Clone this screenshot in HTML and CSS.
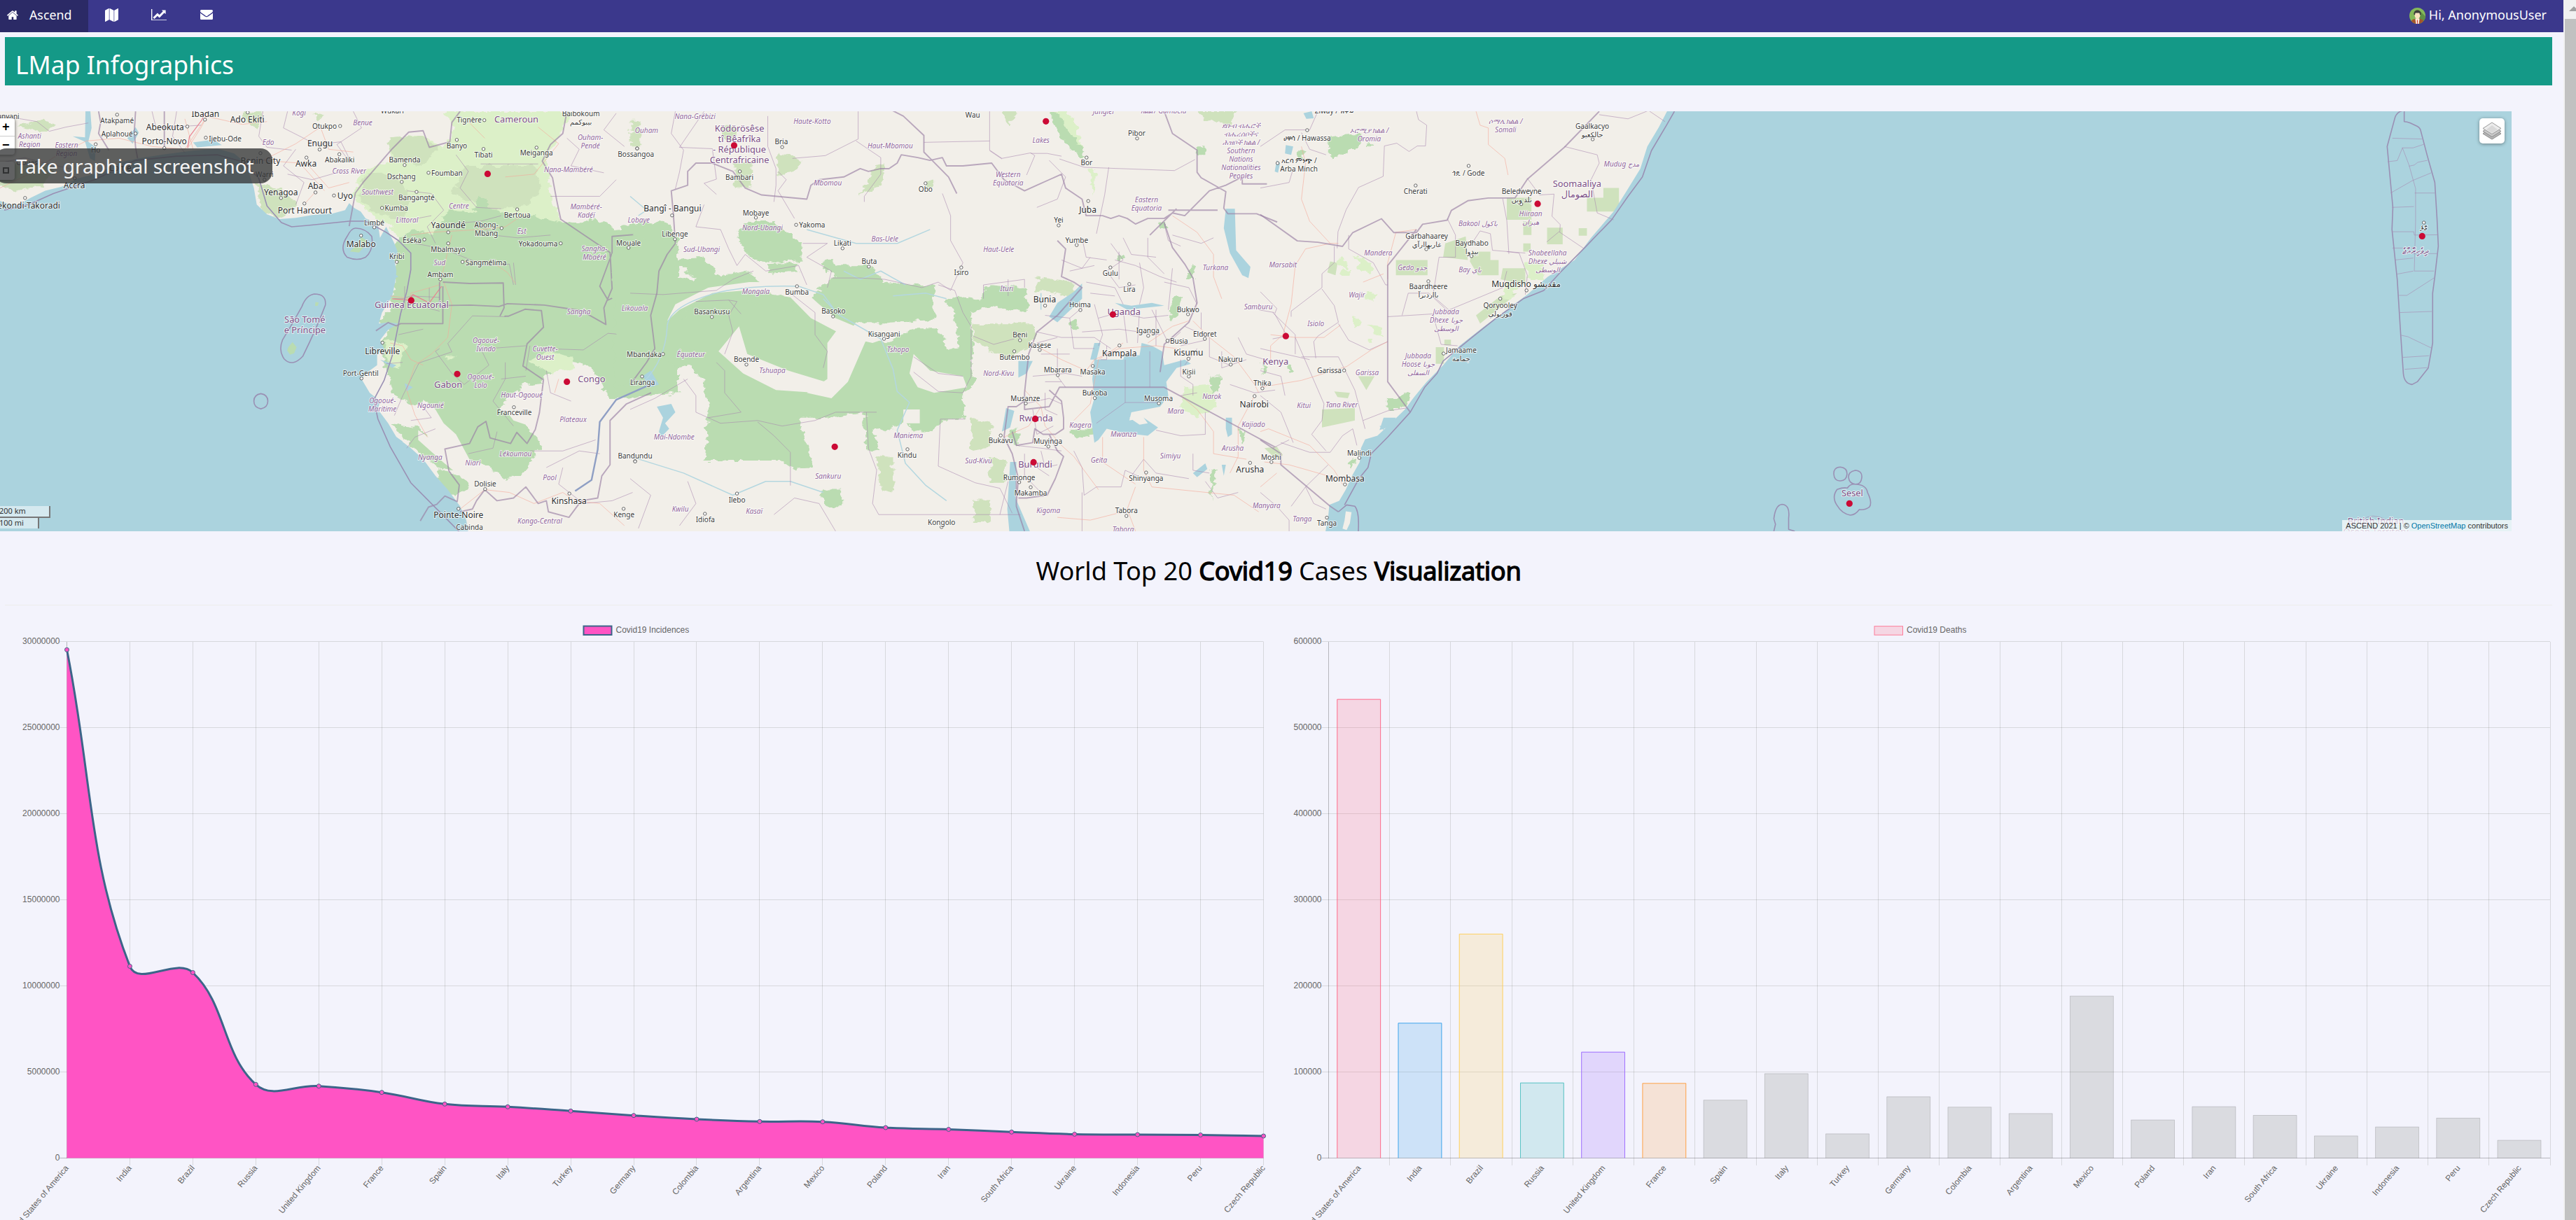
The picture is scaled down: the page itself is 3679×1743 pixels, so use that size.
FILE: index.html
```html
<!DOCTYPE html>
<html lang="en">
<head>
<meta charset="utf-8">
<title>Ascend</title>
<link rel="stylesheet" href="styles.css">
</head>
<body>
<div class="window">
<div class="page">
  <header class="nav">
    <a class="brand"><svg class="i-home" viewBox="90 230 1620 1310"><path d="M1472 992v480q0 26-19 45t-45 19h-384v-384h-256v384h-384q-26 0-45-19t-19-45v-480q0-1 .5-3t.5-3l575-474 575 474q1 2 1 6zm223-69l-62 74q-8 9-21 11h-3q-13 0-21-7l-692-577-692 577q-12 8-24 7-13-2-21-11l-62-74q-8-10-7-23.5t11-21.5l719-599q32-26 76-26t76 26l244 204v-195q0-14 9-23t23-9h192q14 0 23 9t9 23v408l219 182q10 8 11 21.5t-7 23.5z"/></svg>Ascend</a>
    <a class="link l-map"><svg viewBox="0 0 1792 1792"><path d="M512 0q13 0 22.500 9.500t9.500 22.500v1472q0 20-17 28l-480 256q-7 4-15 4-13 0-22.500-9.500t-9.500-22.500v-1472q0-20 17-28l480-256q7-4 15-4zm1248 0q13 0 22.500 9.500t9.500 22.500v1472q0 20-17 28l-480 256q-7 4-15 4-13 0-22.500-9.500t-9.500-22.500v-1472q0-20 17-28l480-256q7-4 15-4zm-1120 0q8 0 14 3l512 256q18 10 18 29v1472q0 13-9.500 22.500t-22.500 9.500q-8 0-14-3l-512-256q-18-10-18-29v-1472q0-13 9.500-22.500t22.500-9.500z"/></svg></a>
    <a class="link l-chart"><svg viewBox="0 128 2048 1536"><path d="M2048 1536v128h-2048v-1536h128v1408h1920zm-128-1248v435q0 21-19.500 29.500t-35.500-7.500l-121-121-633 633q-10 10-23 10t-23-10l-233-233-416 416-192-192 585-585q10-10 23-10t23 10l233 233 464-464-121-121q-16-16-7.500-35.500t29.500-19.500h435q14 0 23 9t9 23z"/></svg></a>
    <a class="link l-mail"><svg viewBox="0 256 1792 1408"><path d="M1792 710v794q0 66-47 113t-113 47h-1472q-66 0-113-47t-47-113v-794q44 49 101 87 362 246 497 345 57 42 92.500 65.500t94.500 48 110 24.500h2q51 0 110-24.500t94.500-48 92.500-65.500q170-123 498-345 57-39 100-87zm0-294q0 79-49 151t-122 123q-376 261-468 325-10 7-42.500 31t-54 38.500-52 32.500-57.500 27-50 9h-2q-23 0-50-9t-57.500-27-52-32.500-54-38.500-42.500-31q-91-64-262-182.500t-205-142.500q-62-42-117-115.500t-55-136.500q0-78 41.500-130t118.500-52h1472q65 0 112.500 47t47.500 113z"/></svg></a>
    <div class="user">
      <svg class="avatar" viewBox="0 0 46 46"><defs><clipPath id="av"><circle cx="23" cy="23" r="23"/></clipPath></defs><g clip-path="url(#av)"><path fill="#84b85a" d="M0 0h46v46H0z"/><path fill="#5f8f45" d="M31 10l15 15v21H26z"/><path fill="#a4562b" d="M4 46c0-10 5-13 13-14h12c8 1 13 4 13 14z"/><path fill="#fff" d="M17 31h12l-2 15h-8z"/><path fill="#d8463c" d="M21 35h4l-1 11h-2z"/><path fill="#fbe3c0" d="M15 16q8-5 16 0v7q-1 6-5 8v4h-6v-4q-4-2-5-8z"/><path fill="#3d3d3a" d="M13 20c-1-8 3-13 10-13s11 5 10 13l-3 1-1-6H17l-1 6z"/></g></svg>
      <span>Hi, AnonymousUser</span>
    </div>
  </header>
  <h1 class="banner">LMap Infographics</h1>

  <section class="map">
    <svg class="tiles" viewBox="0 159 3587 600" width="3587" height="600">
      <defs><filter id="rough" x="-5%" y="-5%" width="110%" height="110%"><feTurbulence type="fractalNoise" baseFrequency=".045" numOctaves="3" seed="4"/><feDisplacementMap in="SourceGraphic" scale="26" xChannelSelector="R" yChannelSelector="G"/></filter></defs>
      <!-- west: Ghana to Congo -->
      <g transform="translate(0 150) scale(.5867 .3954)">
        <path class="lg" d="M1080 23H1390L1370 90 1330 190 1340 320 1370 430 1400 460 1300 520 1000 520 950 440 890 380 860 330 880 240 950 200 955 130 1010 105 1080 150 1110 80z"/>
        <path class="mg" d="M1130 220H1300L1320 300 1290 360 1200 380 1100 320zM940 120L1020 110 1070 160 1020 220 960 190zM890 250L960 250 1000 330 980 420 900 380 870 330zM0 230L40 210 90 200 130 240 100 290 40 310 0 290zM40 80l60-30 30 20-20 30zM590 23h50l-10 60-30-20zM620 280l60 20 40 60-30 50-50-20zM760 30l30 10-20 20z"/>
        <path class="dg" d="M960 500L1000 450 1060 470 1090 380 1150 390 1170 330 1200 380 1250 400 1300 400 1350 420 1400 430 1450 410 1500 450 1568 420 1650 480V1040L1500 1060 1480 1060 1465 1010 1440 950 1390 925 1340 960 1320 1000 1280 1010 1240 1050 1215 1100 1260 1110 1290 1180 1320 1230 1290 1290 1270 1340 1230 1350 1180 1300 1120 1270 1090 1180 1060 1120 1035 1070 1000 1080 960 1050 940 960 925 870 945 810 920 780 950 740 960 640zM950 1150L1020 1165 1060 1230 1110 1310 1080 1320 1020 1260zM1065 1315L1130 1350 1145 1380 1110 1410 1070 1380zM1440 900h25v8h-25z"/>
        <path class="lg" d="M1290 930l40 -40 60 20 10 40-60 20zM940 850l50 20-20 80-30-20zM1085 905l25 5-20 15z"/>
        <path class="land" d="M1030 1065l30 35 20 50 30 40 40 110-20 10-50-80-30-60-25-60zM1018 1175l40 40 60 85 30 40-20 10-50-60-60-80zM1240 1050l20-20 20 60 20 10-10 60-40-20-20-40zM1520 750l8 60 10 100 12 40-12 0-14-60-12-100z"/>
        <path class="sea" d="M-5 345L40 365 75 335 110 310 150 295 190 265 230 250 300 205 340 192 400 178 470 165 530 158 570 175 590 200 605 240 618 300 625 360 650 395 680 412 720 408 760 398 810 392 840 380 850 355 862 372 878 385 890 410 920 430 925 480 940 440 960 500 968 530 960 560 965 600 962 640 955 690 930 750 922 790 945 785 970 790 945 812 925 850 935 880 918 900 918 940 895 965 880 990 900 1040 925 1070 920 1100 945 1150 965 1200 1000 1240 1030 1280 1060 1340 1090 1390 1120 1450 1135 1500 1140 1545H-5z"/>
        <path class="isle" d="M880 478l12 10-3 20-15 25-22-4 15-22zM768 712l8 2-3 12-6 0zM702 875l10-18 10 18-6 22-10 5-7-15z"/>
        <path class="sea" d="M208 23h12l3 60-8 50 18 20-2 50-12-10-12-60-30-20 30 4zM310 120l20-40 8 20-15 40zM470 135l50-10 20 20-60 8zM950 600l20 20-15 10zM925 920l40 20-10 10zM985 1005l20 15-15 15zM955 1190l25 25-5 10zM918 1120l15 10-10 20z"/>
        <path class="adm" d="M30 45L90 60 120 95 160 80 215 65M0 210l60-20 50 20 60 20M370 23l10 60 110-10M430 23l-10 90 30 60M640 23l-10 90 20 40 60 10M700 23l-10 60 80 60 60-10 20 60M860 23l20 60-60 60 30 60M720 160l-30 60 50 60-20 80M830 240l-70 30-60-20M1170 213H1310M1110 180l30 60-20 60 40 70 60 5M990 310l60 10 30 60-40 60 20 60M1050 400l-70 20M1160 420l40 50 60 10 80-10M1010 500l70 20 100 60 60-5 10 75M1250 570l5 80M1090 430l80-10 50-20M1340 330h120l40-60M1380 120l30 40-20 60 80 25M1500 30l-30 60 50 60M960 700h20l20-10 70 5M985 740V655M1045 660v75l25 10M1150 762l80 3M1150 762l-60 100 10 30-80 40-40 120-20 70M1030 810l-60 20M940 935l40-5M1170 880l20 60-60 70-30-40-40-80 10-10M1190 880l90-10M1230 930v60l-30 80 50 90M1000 1140l50-10-20-40M990 1240l20-40 50-30M1210 1180l-10 60-60 20M1280 980l-60 10M1320 880l100 5 60-60 80 10M1290 870l-10 90M1330 960l10 80 50 30M1290 1250l80 0 80-40M1330 1310l80-60 50 10M1370 1310l-10 60 60 70 70-10 50-30"/>
        <path class="road" d="M0 300l70-50 60-60 80-60 80-10 80 30 80 10 50-110M470 160l-20-110M460 150L490 80 510 23M500 40l90 30 60-10M640 200l90 10 60 100M640 200l80-60 60-60M740 200l60 100 50-20M740 360l30-50M780 80l20 80 60 10M1000 470l50-10 120-10 60-10 50-50M1100 470l-20 120-10 60-70 30 0 20-50-10M1080 640l20 80-10 120-40 60-40 40-20 90 20 90 30 80M1125 565h70l40 40 20 40M950 860l30 10 20 50 30 20M1350 1040l10-50M1120 1460l60-70 60 10 60 40 70-40 30 30 60 10 60 80M1310 80l50 60-60 110-70 10M1180 120l-40-60"/>
        <path class="redroad" d="M457 155l4-40 30-60 8-25M955 700l40 5 10-20 40 30 30-60"/>
        <path class="bord" d="M240 23l5 40-5 40 25 60M330 23l-3 70 3 60 5 40M400 23v130M1120 23l-20 40-5 70-50 20-15-60-35 5-40 60-70 120-20 40-10 80-5 40M1380 23l-10 80-30 40-20 60 25 60 10 80 10 70 60 60 60 60 5 130-20 70 5 60-60-50-90-20-90-5-20 10-70-5-75 2V640M1078 655V790H975l-10 8-20-12-30 30M1078 640l65 5 82-2 2 90-10 30M1228 763l10 0 40-25 40 5 5 60-40 60-10 80 50 50-10 120-10 60-20 50-25-40-15 40-50-20-10-60-20 20-20 60-60 20 10 80 25 50-5 60-30-20-20 30-20 10-20 50M1120 1470l30-10 10-30 20-40 30 40 40-10 30-40 30 60 20-10 5 40 50 20 30-60 40-10 10-80 20-40 0-160 40-60 60-40M1555 655l-75 50-20-50 30-120 0-60 80-10"/>
        <path class="river" d="M1400 1395l40-40 15-110 5-100 40-80 60-40 30-20"/>
        <path class="mar" d="M10 380l60-20 60-40 100-50 100-70 100-15 100-5 60 25 40 60 20 100 35 60 25 15 40-5 100-15 40 0 50 40 30 30 30 45 0 60-10 80-15 80-20 150-20 90-25 70 10 70 30 100 50 130 80 120 60 90 40 80 10 70M865 445q25 0 40 30 5 50-15 75-20 15-45 0-20-30 0-75 10-30 20-30zM765 683q30 0 27 40-20 80-55 185-25 40-45 10-15-30-4-70 25-60 47-120 10-40 30-45zM635 1043q17 4 17 27t-17 28q-17-5-17-28t17-27z"/>
      </g>
      <!-- centre: Central Africa to Lake Victoria -->
      <g transform="translate(900 150) scale(.5867 .3954)">
        <path class="dg" d="M-40 490L100 490 105 560 110 620 150 630 210 620 290 600 330 660 420 690 440 700 470 650 500 620 480 590 500 580 580 580 620 640 700 650 740 655V775L620 790 560 790 530 800 620 860 690 810 740 810 768 850 770 880 800 875 790 740 765 710 800 690 850 700 870 650 960 660 970 740 920 745 890 720 830 750 835 950 840 1010 815 1040V1135H760L740 1180 690 1180 670 1140 620 1180 590 1170 610 1250 575 1245 570 1110 480 1130 410 1130 445 1310 400 1315 370 1285 180 1285 190 1110 180 1000 140 940 100 950 80 860 40 970 0 1000-40 1030zM0 460l70-40 25 10 10 55-60 5zM290 420l60 0 40 50 25 30 0 60-50 10-60-10-30-40-15-60zM335 575l75-5 0 30-70 10zM465 570l30-15 10 30-30 20zM648 720l20-10 0 60-20 0zM100 560l80-10 40 70-60 10zM465 1390l50 0 0 60-40 0zM1070 1170l60 0 10 20-60 15z"/>
        <path class="land" d="M90 780l20-60 80-60 100-20 110 0 60 80 40 50 80 50 30 30-20 10-60-20-90-70-50-75-110-25-80 10-80 60zM265 800l20 100 100 60 90 40-20 40-100-10-80-60-60-80zM480 860l30-60 70 30-50 170-40 60-60-20 50-50zM690 900l40 60 80 20 10 40-80 20-40-20-20-50zM665 1100h40v50h-40z"/>
        <path class="dg" d="M110 760l90-70 100-20 70 20 40 60-60-10-60-30-90 10-80 60z"/>
        <path class="mg" d="M1 60h25v90H0zM225 75h30v50h-30zM255 210h37v90h-37zM360 170l60 30-10 30-50 30zM600 220l20-10-10 80-40 30-10 10zM720 270h20v30h-20zM835 1425h38v85h-38zM875 1280h38v85h-38zM905 23h40l-20 50zM1380 23h100l-20 50-60-20zM600 1270h40l0 130-30-10zM835 790h150v60l-60 70-30-20-60-50zM830 1130l55 30-20 80-35 10zM990 620l90 20 10 60-60-20-40-10z"/>
        <path class="lg" d="M1035 23h30l25 70 10 80-30-40-30-60zM1120 230h12l-2 70-8 30zM1350 1020l60-10 20 80-50 40-40-40z"/>
        <path class="dg" d="M1020 23h20l30 80 40 80-10 10-50-70zM1360 580h10v50h-15zM1285 425l20-5 5 25-20 5zM1190 540h10v20h-10zM1070 780l15-10 5 40-15 5zM1320 700l20-10-5 70-20 20zM1415 980h20v60h-20zM1380 150h20v30h-20zM1410 1320h15l-10 110zM920 1170l20 0 5 60-15-10zM1480 1170l20 20-10 40z"/>
        <path class="sea" d="M1130 920L1200 920 1205 900 1240 905 1245 860 1270 870 1295 890 1300 940 1350 920 1365 935 1330 950 1305 1000 1310 1050 1290 1090 1220 1110 1215 1140 1250 1130 1285 1165 1260 1195 1200 1185 1160 1170 1140 1210 1130 1220 1120 1110 1130 1060 1125 990zM1100 645l0 55-60 85-20-20 20-50 40-40zM1450 375l22 0 3 150 35 60-5 40-15-10-30-80-15-90zM945 925l35 0-15 45-20 15zM915 1095l20 10-10 60-20 15zM925 1290h15l-2 130 35 120h-50l-5-80zM65 1090l35-10 10 30-25 40 10 20-20 30-5-20 10-50zM50 960l20 50-20 10-20-40zM1370 1330l30-35 5 20-25 30zM1440 1300l10 0-5 40zM1450 1130l15 0 0 60-10 10-5-30zM1180 715l40 10 50-10 30 10-90 15zM1130 860l15 0-10 60h-15z"/>
        <path class="land" d="M1215 1130l30-10 15 30-20 5z"/>
        <path class="water" d="M470 700l40 60 100 85 30 110 10 80 30 40-30 100 20 120 50 80 50 55M410 655l60 30 30 60M410 655q-110-5-190 20-130 50-130 130-5 120-60 200M0 1270l130 60 120 80 80-50 60 0 80 40M430 450l120 50 100 0 80-50M520 600l40 30 50-30 60 50M640 690l80-10 50 20M0 330l40 50-20 20M1000 740l0-60"/>
        <path class="adm" d="M110 23l-10 80 30 60-10 80-10 60M335 40v110l20 80 0 60-5 60M180 23l-60 130 80 5 10 110-30 15 30 40M360 240l20 30-20 40 40 100M555 23l0 100-80 60-80 10M550 130l60 60 0 60-40 80 0 20M875 23v140l30 30 70-20 10 10-20 70M875 130l-160 5M875 165l30 30M975 175h40l35 10M1020 200l40 60-20 80-50 30M1165 225l-10 100-20 140M1045 195l60 30 220 12 50-40M420 500l60 0-50 50 60 50-10 60M760 320l20 80 0 90 30 80-30 100-30-30-40 20-90-30-60-5-70 0M180 360l-20 80 60 10 20 70 20 60 20-40 50 60 80-20 20 70M750 650l40 20 20 80 20 50 0 100 0 80-20 60-60-5-60-70M690 910l60 60 60 10M0 680l80 5 130-15 40-40 50-30M160 710l80-5 20 5-20 50 10 60-20 80M240 705l30 50M210 930l20 30 0 80 40 70-80 20M390 680l60 70 0 80 30 60-10 60M310 1145l40 50 40 60 0 120M130 990l30 60 0 60 60 40 90-10 60 20 80-20 50-30 100 0M575 1110l5 130 20 80-10 120 15 40H950M815 1135h-60l-5 170 90 60 60 20 30 90M0 1100l60-40 80-70M0 1350l50 60-30 120M140 1360l20 80-40 80M350 1480l50-60 60 20 40 100M900 1480l20-120M835 835l50 30 50-20M920 630l0 60M860 700l0-50 100-20 0 30M1080 1250l20 60 5 100 30-30 60 0 10-60 30 20M1100 1400l0 140M1220 1340l30-60 30 50 80 20M1400 1110v80l-60 5-60-20M1370 1260l0 60 40 10M1400 1360l30 60 50-20M1320 470l70 30 30-20M1050 560l50 30 20-40M1110 640l70 20 20 60M1180 560l50 20 60 40 40 20M1190 530l0 100M1240 570l10 90-10 60M1320 590l-10 150M1300 640l60 20 20 60M1010 760l60 10 40-50M990 820l60 20 80 0 40 40M1070 770l10 110 50 0M1130 720l20 110-10 40M1040 880l0 100 20 40M980 980l80-10 40 10M1200 740l10 120M1240 740l-5 120M1280 740l0 130M1010 1000l40 0M1270 740l20 60 20 60 30-40M940 1230l60 10 50 10M960 1260l0 80 40 60M1000 1250l10 60 30-10M980 1300l40 40M950 1310l50-20M1350 800l60 40 0 70 50 30M1390 750l0 60M1440 890l0 60 60-30M1340 1050l40-10M1460 1010l60 30 50-10M1480 840l20 60 68 30M1530 740l38 10M1205 920v155l80 0M1205 1075l-70 75M1265 890v130M1160 870v50h-15"/>
        <path class="adm" d="M1170 500l30 60-40 40 30 60 40-10M1200 480l20 60 60 10M1260 480l0 70 40 60M1300 430l10 60 30 20M1100 480l10 70 50 10M1070 600l60-20M1120 680l60 10M1140 770l50-20 60 20 60-10M1100 820l90-10 100 20M990 860l50-20M1000 900l70 0M960 1080l60-20 30 20M980 1100l10 90 40-30M1010 1040l0 60 30 20M1340 920l0 60 30 30 0 40M1380 880l-30 60M1340 870l60-20"/>
        <path class="road" d="M1320 400l60 60 40 80 0 80 20 80M1000 1090l-30 70-60 40M960 1030l40 60 10 70 40 70 30 40 60 120M1000 880l50 40 60 40 20-40 60-40 90-10 50 10M1260 860l60-60 40-20M1370 780l40 60 60 70 50 100 10 30M1230 1380l-20 80 20 80M1250 1200l0 120 20 60 200 30 60 60M1520 1050l-40 110 0 110-20 60M1040 1490l80 10 80-30M1150 1200l0 90 80 80M1200 860l-60 60-20 160-40 60M1340 1050l40 50 40 80 0 80 80 20"/>
        <path class="bord" d="M0 1010l40-80 20-50-10-120 15-80 5-80 20-60 20-40-5-110-5-80 40-20 0-50 20-30h40l50 30 30 60 40 25 110 15 10-50 20-20 60-10 40-30 20 10 30-10 20 0 20-20 10-30 40 10 30 10 30-10 10 30 40 0 70-10 30 60 50 40 30-20 30-20 30-20 10 50 40 40 10 60 40 0 20 10 20-10 20 10 20 20 30-20h40l20-20 30 10 60-90 40-20 40-30 0 25 60 0M795 320l-20-60-40-60-20-30 0-60-50-70-40-30-15-30 20 0M1265 470l65-95M1310 380h120M1300 23l20 80 60 60 0 80 10 20 60 50-5 60 10 20H1525l50 30M1040 490l20 30-10 100 30 20 20 20-60 100-50 60-20 80-10 140 0 60 60-10 25-70H1300l275 220M1300 425l20 90 30 60 20 50 10 90-20 70-60 80-10 100M960 1040l0 30-20 20-20 0-10 110 20 60 15 90-5 90M1020 1030l30 40 5 60 0 40-20 20-30 0-20-20-5 50-40 10-10-50M1020 1190l20 60 15 20-20 80-20 60-50 10-20 0M940 1350l0 100 20 90"/>
      </g>
      <!-- east: Horn of Africa coast -->
      <g transform="translate(1800 150) scale(.5867 .3954)">
        <path class="dg" d="M165 115l80-10 0 40-30 20-30 30-15 0zM255 130l20 20h-10zM345 1040h20l-10 50-50 0zM310 1060h30v40h-30zM220 1275l12 5-5 30-10 0zM70 940h8v30h-8zM0 930l15 20-10 30zM90 170l15 0 0 20-15 0z"/>
        <path class="mg flat" d="M330 560h77v55h-77zM600 335h60v80h-60zM640 420h20v50h-20zM698 443h38v60h-38zM775 445h20v27h-20zM795 335h40v50h-40zM835 300h38v85h-38zM450 500l50-25 5 85-60-10zM515 530h45v30h20v55h-50l-20-50zM590 590h55l0 60-60-20zM170 565l18 5-5 45-20-10zM150 1100l80-5 0 45-80 25zM238 980h40l-20 50zM427 875h20v60h-20zM640 500h18v30h-18zM448 848h16v20h-16zM525 760l60-70 40-10-40 50-50 60zM180 1035l38 5-5 20-25-5zM10 1240l30-5 15 30-20 10z"/>
        <path class="lg" d="M195 540q20 20 15 50l-20-10zM230 545l40 25 5 40-30-10zM195 590l25 5-5 20-20-5zM260 670l20 10-5 25-20-5zM225 765l18 10-8 30-10-10zM265 790l30 15 0 30-20-10zM262 845h15v12h-15zM640 570h50v60h-40zM600 640l30 10-20 50-20 0z"/>
        <path class="sea" d="M62 145l18 5-5 30-15-5zM40 200l8 10-5 35-8-5zM105 30l20-7 5 25-18 2zM300 1130l30 0-10 30-30 15zM290 1160l15-5-5 20z"/>
        <path class="sea" d="M990 23L970 80 942 150 925 230 892 310 860 385 805 480 765 560 700 620 650 685 600 740 545 800 485 870 445 940 405 1000 372 1060 352 1100 310 1160 285 1195 255 1208 245 1240 242 1290 225 1335 208 1390 192 1430 168 1445 165 1490 158 1545H3100V10z"/>
        <path class="land" d="M208 1468l14 3-4 40-8 25-10-5 5-30z"/>
        <path class="adm" d="M380 23l5 30 20 20-3 75-20 0-20 20-30-30-30 10-3 110-60 40-30 80-20 80-2 60M825 35l70 15 50-30 40 40M740 150l80 30 5 30-20 60 15 120 40 25M650 265l30 60 35-3-5 80 20 30-1 27M590 338l10 80 5 120M455 410l20 60 0 80 -40 0-15 140 50 65M515 500l20-45 25 10 5 60 80 10M600 530l30 5 20 80-5 70M600 600l-10 60-130 80M310 765l110-10 20 110 40 5M345 760l15-80 50 0 50 70M180 510l0 60-30 40 0 50-75 85 0 20M215 470l0 50 60 50 30 80 5 0M150 665l30 60 10 60-50 50-10 20 5 60M0 675l40 60-5 20 30 80-35 10M30 750l55 80 0 70M190 790l25 60 50 35 45-30M85 840l70 240-5 60-25 50 35 60M100 910l90 0 40 120 25 140M250 1140l60-35 45-10M50 1220l70 35 50 0 30-60 25-25 10 60M110 1380l55-80M75 1450l35-70 20 60 30 20M697 495l30-37 60 60M0 880l60 20 60 20M0 960l50 20 10 70M0 1050l50 60 30 110M30 1240l40-30M0 1400l40 50 30 50 0 40M0 150l60-60 60 0 20-67M100 100l20 60 40 20M0 300l70-20 10-50"/>
        <path class="road" d="M100 150l10 60-10 130 20 80 50 80 20 0M525 23l10 50 20 10 0 60 40 50 8 60M170 500l-60 20-25 60-10 140-20 110-30 40 0 50M25 830l60 10 70 0 40-45M310 630l0-60 20-110 50-10M250 640l50-30M0 1020l100-25 110-50 60-60 40-30M0 1180l20-10 100 60 60 90 20 50M10 1290l60 10 130 55M0 1380l40-50"/>
        <path class="bord" d="M825 23l-85 130-90 115-30 68h-65l-50 10-40 35-10 35-60 15-15 30-55 0-30-50-70 50-25 50-60-15-50-5-90-95M380 450l-70 130v420l45 90 10 20M0 1210l50 50 0 40 120 150 20 20"/>
        <path class="mar" d="M1008 23L990 70 952 165 930 260 895 330 855 415 790 515 730 605 690 670 640 700 570 775 515 840 445 925 430 970 400 1020 365 1110 310 1200 270 1260 262 1310 240 1350 205 1445M190 1470l20-25 20 5q12 20 8 100M1412 1308q17 3 16 26t-16 24-16-24 16-26zM1448 1320q18 2 16 27t-16 23-16-23 16-27zM1445 1370q30 0 33 30 12 35 5 52-10 12-25 10-10 20-22 20-20-5-32-35-14-30 0-58 15-8 25-5 6-14 16-14zM1250 1540l4-25-4-20q4-50 20-52 20 2 16 50l0 40 15 7"/>
      </g>
      <!-- Indian Ocean: Maldives -->
      <g transform="translate(2700 150) scale(.6244 .3954)">
        <path class="mar" d="M1175 60q6 0 14 5l16 12q7 6 8 18l15 90 17 95 5 130 3 100-8 110-5 60v180l-10 90-25 50-12 10q-18-3-20-40l-6-140-8-200-12-180 2-80-13-220 18-105q5-23 21-25z"/>
        <path class="adm" d="M1148 120l68 3M1170 155h25l25-13M1137 205l22-4 12-46 15 62 15 85v120l-3 178 45 0M1186 221l12-4 8-10 22-7M1144 318l50-45 43-28M1199 318h46M1147 370l50-3M1147 458h50l1 12 53-1M1148 517h48M1154 560l42-7M1196 537h54M1159 611l37-11M1163 688h18l62-63M1165 750l73-4M1168 832l15 5 54 41M1172 912l60-6M1176 955l52-6M1080 1500q20-30 55 0"/>
      </g>
      <g id="places"></g>
    </svg>
    <div class="zoom"><span>+</span><span>−</span></div>
    <div class="box"><i></i></div>
    <div class="layers"><svg viewBox="0 0 26 26"><path fill="#b5b5b5" stroke="#8d8d8d" d="M13 8l13 9-13 8L0 17z"/><path fill="#c8c8c8" stroke="#8d8d8d" d="M13 5l13 8.500-13 8L0 13.500z"/><path fill="#ececec" stroke="#9a9a9a" d="M13 1l13 8.500-13 8L0 9.500z"/><path fill="#d9d9d9" d="M13 5l8 6-8 5-8-5z"/></svg></div>
    <div class="scale"><span class="km">200 km</span><span class="mi">100 mi</span></div>
    <div class="attr">ASCEND 2021 | © <a>OpenStreetMap</a> contributors</div>
    <div class="tip">Take graphical screenshot</div>
  </section>

  <h2 class="title">World Top 20 <b>Covid19</b> Cases <b>Visualization</b></h2>
  <section class="charts">
    <svg id="cases" viewBox="0 865 1830 878" width="1830" height="878"></svg>
    <svg id="deaths" viewBox="1830 865 1831 878" width="1831" height="878"></svg>
  </section>
</div>
<aside class="bar"><svg class="up" viewBox="0 0 16 27"><path d="M6 16l7-7 7 7z"/></svg><div class="thumb"></div></aside>
</div>
<script src="script.js"></script>
</body>
</html>
```
FILE: styles.css
```css
* { box-sizing: border-box; }
body { margin: 0; background: #f3f3fc; font-family: "Noto Sans", "DejaVu Sans", sans-serif; overflow: hidden; }
.window { display: flex; width: 3679px; height: 1743px; overflow: hidden; }
.page { width: 3661px; flex: none; }
.nav { display: flex; align-items: center; height: 46px; background: #3b388c; color: #fff; font-size: 17.800px; }
.nav svg { fill: #fff; display: block; }
.brand { display: flex; align-items: center; gap: 16px; width: 126px; height: 46px; padding: 0 0 4px 10px; background: #2b2a66; }
.i-home { width: 16px; height: 13px; }
.link { display: flex; }
.link svg { width: 100%; }
.l-map { width: 19px; margin: 0 0 4px 24px; }
.l-chart { width: 22px; margin: 0 0 4px 47px; }
.l-mail { width: 18px; margin: 0 0 4px 48px; }
.user { display: flex; align-items: center; gap: 5px; margin-left: auto; padding-right: 24px; padding-bottom: 2px; font-size: 18px; }
.user span { padding-bottom: 3px; }
.avatar { width: 23px; height: 23px; }
.banner { margin: 7px 16px 0 7px; height: 69px; padding: 15px 0 0 15px; background: #149987; color: #fff; font-size: 35.500px; font-weight: 400; line-height: 48px; }
.map { position: relative; width: 3587px; height: 600px; margin-top: 37px; background: #f2efe9; overflow: hidden; }
.tiles { display: block; }
.tiles path { vector-effect: non-scaling-stroke; stroke-linejoin: round; }
.land { fill: #f2efe9; }
.sea { fill: #abd3de; }
.dg, .isle { fill: #badcb1; }
.mg { fill: #cfe2bd; }
.lg { fill: #dcf0c8; }
.dg, .lg, .mg { filter: url(#rough); }
.flat { filter: none; }
.adm, .road, .redroad, .bord, .mar, .river, .water { fill: none; }
.adm { stroke: #a583ad; stroke-opacity: .55; stroke-width: 1; }
.road { stroke: #f5a898; stroke-opacity: .75; stroke-width: .8; }
.redroad { stroke: #ea8090; stroke-width: 1.200; }
.bord { stroke: #9a7fa5; stroke-opacity: .65; stroke-width: 1.900; }
.mar { stroke: #9a90b4; stroke-width: 1.600; }
.river { stroke: #8f9fc4; stroke-width: 2.400; }
.water { stroke: #b4d7e0; stroke-width: 1.500; }
#places text { text-anchor: middle; paint-order: stroke; stroke: #fff; stroke-opacity: .7; stroke-width: 2px; stroke-linejoin: round; font-family: "Noto Sans", "DejaVu Sans", sans-serif; }
#places .t { font-size: 10px; fill: #3a3a3a; }
#places .c { font-size: 12px; fill: #2e2e2e; }
#places .n { font-size: 12.800px; fill: #7c4f86; }
#places .s { font-size: 10px; fill: #93689d; font-style: italic; }
.dot { fill: #fff; stroke: #555; stroke-width: .9; }
.hit { fill: #cb0a35; }
.zoom { position: absolute; left: -10px; top: 10px; width: 31px; height: 52px; background: #fff; border-radius: 4px; box-shadow: 0 1px 5px rgba(0,0,0,.65); }
.zoom span { display: block; height: 26px; padding-left: 13px; font: bold 18px/26px "Liberation Mono", monospace; }
.zoom span:first-child { border-bottom: 1px solid #ccc; }
.box { position: absolute; left: -10px; top: 72px; width: 31px; height: 26px; padding: 8px 0 0 14px; background: #fff; border-radius: 4px; box-shadow: 0 1px 5px rgba(0,0,0,.65); }
.box i { display: block; width: 9px; height: 9px; border: 2px solid #222; }
.layers { position: absolute; right: 10px; top: 10px; width: 36px; height: 36px; padding: 5px; background: #fff; border-radius: 5px; box-shadow: 0 1px 5px rgba(0,0,0,.4); }
.layers svg { display: block; }
.scale { position: absolute; left: -5px; bottom: 4px; font: 11px/14px "Noto Sans", sans-serif; color: #333; }
.scale span { display: block; height: 17px; padding-left: 2px; border: 2px solid #777; border-top: 0; background: rgba(255,255,255,.5); }
.km { width: 77px; }
.scale .mi { width: 61px; height: 15px; border-bottom: 0; }
.attr { position: absolute; right: 0; bottom: 0; height: 16px; padding: 0 5px; background: rgba(255,255,255,.7); color: #333; font: 11px/16px "Liberation Sans", sans-serif; }
.attr a { color: #0078a8; }
.tip { position: absolute; left: -8px; top: 53px; width: 397px; height: 50px; padding-left: 31px; border-radius: 17px; background: rgba(52,54,55,.78); color: #f4f4f4; font-size: 28px; line-height: 50px; letter-spacing: -.05px; white-space: nowrap; }
.title { margin: 0 16px 0 7px; height: 106px; padding-top: 32px; border-bottom: 1px solid #ececec; text-align: center; font-size: 36.200px; font-weight: 400; line-height: 48px; }
.title b { font-weight: 400; letter-spacing: -.3px; -webkit-text-stroke: 1.300px #000; }
.charts { display: flex; }
.charts svg { display: block; flex: none; }
.charts text { font: 12px "Liberation Sans", Arial, sans-serif; fill: #666; }
.grid { stroke: rgb(20,28,0); stroke-opacity: .12; }
.zero { stroke: #000; stroke-opacity: .25; }
.area { fill: #ff54c4; }
.curve { fill: none; stroke: #3c6589; stroke-width: 3; }
.pt { fill: #ff54c4; stroke: #3c6589; stroke-width: 1; }
.bar { width: 18px; padding-left: 2px; background: #f1f1f1; }
.up { display: block; width: 16px; height: 27px; fill: #a3a3a3; }
.thumb { height: 1716px; background: #c1c1c1; }
```
FILE: script.js
```js
// Map labels: [sheet, x, y, style, text]; "|" breaks a line.
const sheets = { A: [0, 0.5867], B: [900, 0.5867], C: [1800, 0.5867], D: [2700, 0.6244] };
const labels = [
  ["A",20,40,"t","unvani"],["A",285,57,"t","Atakpamé"],["A",500,31,"c","Ibadan"],["A",602,51,"c","Ado Ekiti"],["A",402,80,"c","Abeokuta"],["A",285,105,"t","Aplahoué"],["A",400,130,"c","Porto-Novo"],["A",548,123,"t","Ijebu-Ode"],["A",72,113,"s","Ashanti|Region"],["A",162,146,"s","Eastern|Region"],["A",233,163,"t","Ho"],["A",653,136,"s","Edo"],["A",728,28,"s","Kogi"],["A",790,77,"t","Otukpo"],["A",883,63,"s","Benue"],["A",955,22,"t","Wukari"],["A",779,139,"c","Enugu"],["A",634,200,"c","Benin City"],["A",644,250,"t","Warri"],["A",68,209,"t","Obuasi"],["A",293,226,"c","Lomé"],["A",745,212,"c","Awka"],["A",827,197,"t","Abakaliki"],["A",850,239,"s","Cross River"],["A",181,290,"c","Accra"],["A",70,363,"c","ekondi-Takoradi"],["A",684,314,"c","Yenagoa"],["A",768,293,"c","Aba"],["A",840,327,"c","Uyo"],["A",742,380,"c","Port Harcourt"],
  ["A",1142,55,"t","Tignère"],["A",1257,52,"n","Cameroun"],["A",1414,32,"t","Baïbokoum|بيبوكمم"],["A",1437,116,"s","Ouham-|Pendé"],["A",1112,148,"t","Banyo"],["A",1177,180,"t","Tibati"],["A",1306,174,"t","Meiganga"],["A",1548,177,"t","Bossangoa"],["A",985,199,"t","Bamenda"],["A",1088,246,"t","Foumban"],["A",977,259,"t","Dschang"],["A",1384,233,"s","Nana-Mambéré"],["A",919,314,"s","Southwest"],["A",1014,334,"t","Bangangté"],["A",1117,366,"s","Centre"],["A",965,372,"t","Kumba"],["A",1427,367,"s","Mambéré-|Kadéï"],["A",1259,397,"t","Bertoua"],["A",911,425,"t","Limbé"],["A",991,415,"s","Littoral"],["A",1091,434,"c","Yaoundé"],["A",1184,432,"t","Abong-|Mbang"],["A",1270,457,"s","Est"],["A",1555,415,"s","Lobaye"],["A",879,501,"c","Malabo"],["A",1003,489,"t","Éséka"],["A",1310,501,"t","Yokadouma"],["A",1530,498,"t","Mouale"],["A",1091,521,"t","Mbalmayo"],["A",1447,518,"s","Sangha-|Mbaéré"],["A",966,547,"t","Kribi"],["A",1070,571,"s","Sud"],["A",1183,569,"t","Sangmélima"],["A",1072,612,"t","Ambam"],["A",1002,722,"n","Guinea Ecuatorial"],["A",1409,747,"s","Sangha"],["A",1545,735,"s","Likouala"],["A",742,776,"n","São Tomé|e Príncipe"],["A",1183,851,"s","Ogooué-|Ivindo"],["A",1327,880,"s","Cuvette-|Ouest"],["A",931,889,"c","Libreville"],["A",878,969,"t","Port-Gentil"],["A",1091,1010,"n","Gabon"],["A",1170,983,"s","Ogooué-|Lolo"],["A",1440,990,"n","Congo"],["A",931,1068,"s","Ogooué-|Maritime"],["A",1048,1086,"s","Ngounié"],["A",1270,1048,"s","Haut-Ogooué"],["A",1252,1112,"t","Franceville"],["A",1395,1137,"s","Plateaux"],["A",1255,1261,"s","Lékoumou"],["A",1047,1272,"s","Nyanga"],["A",1151,1293,"s","Niari"],["A",1546,1269,"t","Bandundu"],["A",1338,1346,"s","Pool"],["A",1181,1370,"t","Dolisie"],["A",1385,1430,"c","Kinshasa"],["A",1116,1482,"c","Pointe-Noire"],["A",1314,1503,"s","Kongo-Central"],["A",1519,1480,"t","Kenge"],["A",1143,1527,"t","Cabinda"],
  ["B",158,40,"s","Nana-Grébizi"],["B",40,91,"s","Ouham"],["B",266,85,"n","Ködörösêse|tî Bêafrîka|- République|Centrafricaine"],["B",443,60,"s","Haute-Kotto"],["B",368,133,"t","Bria"],["B",633,147,"s","Haut-Mbomou"],["B",266,261,"t","Bambari"],["B",481,281,"s","Mbomou"],["B",719,304,"t","Obo"],["B",834,36,"t","Wau"],["B",1000,128,"s","Lakes"],["B",1153,24,"s","Jungler"],["B",1233,103,"t","Pibor"],["B",1111,209,"t","Bor"],["B",920,250,"s","Western|Equatoria"],["B",1298,22,"s","ክልል / Gambela"],["B",1487,74,"s","ደቡብ ብሔሮች|ብሔረሰቦችና|ሕዝቦች ክልል /|Southern|Nations|Nationalities|Peoples"],["B",1114,379,"c","Juba"],["B",1257,341,"s","Eastern|Equatoria"],["B",103,374,"c","Bangî - Bangui"],["B",306,389,"t","Mobaye"],["B",1043,416,"t","Yei"],["B",443,433,"t","Yakoma"],["B",322,444,"s","Nord-Ubangi"],["B",109,466,"t","Libenge"],["B",620,484,"s","Bas-Uele"],["B",517,499,"t","Likati"],["B",174,523,"s","Sud-Ubangi"],["B",897,521,"s","Haut-Uele"],["B",1087,488,"t","Yumbe"],["B",582,565,"t","Buta"],["B",1425,587,"s","Turkana"],["B",806,605,"t","Isiro"],["B",1169,607,"t","Gulu"],["B",917,664,"s","Ituri"],["B",1215,666,"t","Lira"],["B",306,674,"s","Mongala"],["B",406,675,"t","Bumba"],["B",1009,703,"c","Bunia"],["B",1095,722,"t","Hoima"],["B",1202,748,"n","Uganda"],["B",1358,739,"t","Bukwo"],["B",1529,730,"s","Samburu"],["B",199,746,"t","Basankusu"],["B",495,745,"t","Basoko"],["B",1260,816,"t","Iganga"],["B",1399,827,"t","Eldoret"],["B",618,827,"t","Kisangani"],["B",949,830,"t","Beni"],["B",1336,852,"t","Busia"],["B",997,867,"t","Kasese"],["B",652,883,"s","Tshopo"],["B",1191,897,"c","Kampala"],["B",1359,894,"c","Kisumu"],["B",34,901,"t","Mbandaka"],["B",148,901,"s","Équateur"],["B",936,912,"t","Butembo"],["B",1461,919,"t","Nakuru"],["B",283,919,"t","Boende"],["B",346,959,"s","Tshuapa"],["B",897,970,"s","Nord-Kivu"],["B",1041,957,"t","Mbarara"],["B",1126,964,"t","Masaka"],["B",1360,964,"t","Kisii"],["B",30,1003,"t","Liranga"],["B",1539,1006,"t","Thika"],["B",1131,1040,"t","Bukoba"],["B",962,1060,"t","Musanze"],["B",1286,1060,"t","Musoma"],["B",1416,1053,"s","Narok"],["B",1519,1082,"c","Nairobi"],["B",1328,1107,"s","Mara"],["B",988,1131,"n","Rwanda"],["B",1096,1156,"s","Kagera"],["B",1517,1153,"s","Kajiado"],["B",107,1199,"s","Mai-Ndombe"],["B",677,1194,"s","Maniema"],["B",1201,1189,"s","Mwanza"],["B",902,1213,"t","Bukavu"],["B",1017,1214,"t","Muyinga"],["B",1467,1239,"s","Arusha"],["B",1315,1268,"s","Simiyu"],["B",674,1266,"t","Kindu"],["B",848,1286,"s","Sud-Kivu"],["B",1141,1283,"s","Geita"],["B",986,1298,"n","Burundi"],["B",1509,1317,"c","Arusha"],["B",482,1342,"s","Sankuru"],["B",947,1345,"t","Rumonge"],["B",1256,1348,"t","Shinyanga"],["B",975,1402,"t","Makamba"],["B",260,1426,"t","Ilebo"],["B",122,1461,"s","Kwilu"],["B",302,1468,"s","Kasaï"],["B",183,1499,"t","Idiofa"],["B",758,1507,"t","Kongolo"],["B",1018,1464,"s","Kigoma"],["B",1208,1465,"t","Tabora"],["B",1200,1534,"s","Tabora"],
  ["C",265,92,"s","ኦሮሚያ ክልል /|Oromia"],["C",114,119,"t","ሀዋሳ / Hawassa"],["C",180,20,"t","Ziway / ዝዋይ"],["C",94,200,"t","አርባ ምንጭ /|Arba Minch"],["C",597,58,"s","ሶማሌ ክልል /|Somali"],["C",808,76,"t","Gaalkacyo|جالكعيو"],["C",879,212,"s","Mudug مدج"],["C",507,246,"t","ጎዴ / Gode"],["C",771,285,"n","Soomaaliya|الصومال"],["C",378,311,"t","Cherati"],["C",636,311,"t","Beledweyne|بلد وين"],["C",658,393,"s","Hiiraan|هيران"],["C",530,428,"s","Bakool باكول"],["C",405,474,"t","Garbahaarey|غاربهاارآي"],["C",515,498,"t","Baydhabo|بيدوا"],["C",287,535,"s","Mandera"],["C",699,535,"s","Shabeellaha|Dhexe شبيلي|الوسطى"],["C",55,578,"s","Marsabit"],["C",370,587,"s","Gedo جدو"],["C",511,596,"s","Bay باي"],["C",647,646,"c","Muqdisho مقديشو"],["C",409,657,"t","Baardheere|بااردىرآ"],["C",235,685,"s","Wajir"],["C",584,724,"t","Qoryooley|قوريولي"],["C",452,746,"s","Jubbada|Dhexe جوبا|الوسطى"],["C",135,790,"s","Isiolo"],["C",489,885,"t","Jamaame|جمامة"],["C",384,907,"s","Jubbada|Hoose جوبا|السفلى"],["C",37,926,"n","Kenya"],["C",168,960,"t","Garissa"],["C",260,967,"s","Garissa"],["C",106,1085,"s","Kitui"],["C",198,1082,"s","Tana River"],["C",26,1272,"t","Moshi"],["C",241,1257,"t","Malindi"],["C",206,1350,"c","Mombasa"],["C",15,1448,"s","Manyara"],["C",102,1495,"s","Tanga"],["C",162,1511,"t","Tanga"],["C",1441,1402,"n","Sesel"],
  ["D",1219,447,"t","މާލެ"],["D",1200,528,"n","ދިވެހިރާއްޖެ"],["D",1110,1503,"n","British Indian|Ocean Territory"]
];
const towns = { A: "285,35 456,78 330,103 499,53 603,27 400,156 501,118 233,142 828,76 778,161 634,174 746,190 826,178 644,270 182,265 61,336 684,336 768,316 813,327 741,356 1179,55 1112,126 1177,159 1306,154 1551,157 985,217 1043,245 978,278 1014,314 930,372 1259,377 911,442 1091,460 1221,445 879,472 1033,486 1365,500 1530,516 1091,500 966,567 1126,567 1072,630 931,859 880,988 1251,1092 1546,1287 1181,1388 1386,1404 1116,1459 1518,1459",
  B: "17,157 370,152 267,240 719,283 1234,121 1111,190 1115,347 102,399 306,407 1043,435 404,433 109,485 517,518 1087,506 581,584 806,587 1169,587 1215,647 406,655 1010,725 1096,741 199,766 494,764 1358,756 1261,834 1399,845 618,845 949,850 1308,852 997,885 1191,869 1359,917 80,900 935,890 1462,938 283,938 1041,976 1126,943 1360,981 29,981 1539,1024 1131,1059 963,1078 1287,1078 1520,1052 902,1194 1018,1234 675,1244 1509,1293 12,1288 947,1363 1256,1328 975,1381 260,1404 182,1477 758,1525 1208,1485",
  C: "114,91 42,210 809,124 507,220 378,291 635,358 404,521 514,546 648,670 409,637 584,700 446,898 204,959 27,1290 241,1275 206,1371 162,1491", D: "1220,425" };
const hits = { A: "1187,249 1001,706 1113,972 1380,1000", B: "253,146 1012,59 1175,757 986,1134 982,1291 498,1235", C: "675,357 62,835 1434,1440", D: "1216,474" };
const X = (s, x) => sheets[s][0] + x * sheets[s][1];
const Y = y => 150 + y * 0.3954;
let out = "";
const spots = (set, cls, r) => { for (const s in set) for (const p of set[s].split(" ")) { const [x, y] = p.split(",").map(Number); out += `<circle class="${cls}" cx="${X(s, x)}" cy="${Y(y)}" r="${r}"/>`; } };
spots(towns, "dot", 2.2);
for (const [s, x, y, c, t] of labels) t.split("|").forEach((line, i) => {
  out += `<text class="${c}" x="${X(s, x)}" y="${Y(y) + (c === "n" || c === "c" ? 4.5 : 3.7) + i * (c === "n" ? 15 : 12)}">${line}</text>`;
});
spots(hits, "hit", 4.6);
document.getElementById("places").innerHTML = out;

// Charts
const names = ["United States of America","India","Brazil","Russia","United Kingdom","France","Spain","Italy","Turkey","Germany","Colombia","Argentina","Mexico","Poland","Iran","South Africa","Ukraine","Indonesia","Peru","Czech Republic"];
const base = 1654.5, step = 122.9;
function frame(left, right, cols, max, offset) {
  let s = "";
  const w = (right - left) / cols;
  for (let i = 0; i <= 6; i++) {
    const y = Math.round(base - i * step) - 0.5;
    s += `<path class="${i ? "grid" : "zero"}" d="M${left - 10} ${y}H${right}"/><text x="${left - 10}" y="${y + 3.6}" text-anchor="end">${max / 6 * i}</text>`;
  }
  for (let i = 0; i <= cols; i++) {
    const x = Math.floor(left + i * w) + 0.5;
    s += `<path class="${i ? "grid" : "zero"}" d="M${x} 917V${i ? 1665 : 1655}"/>`;
  }
  names.forEach((n, i) => { s += `<text transform="translate(${left + i * w + offset} 1666.5) rotate(-50)" y="4" text-anchor="end">${n}</text>`; });
  return s;
}
const L = 95.5, R = 1804.5, dx = (R - L) / 19;
const py = [928.3,1380.5,1389.5,1549.3,1551.7,1560.7,1577.3,1581.3,1587.3,1593.7,1599,1602.3,1602.7,1611,1613.5,1617.3,1620.4,1621,1621.5,1623];
const pts = py.map((y, i) => [L + i * dx, y]);
const ctrl = pts.map((c, i) => {
  const a = pts[Math.max(0, i - 1)], b = pts[Math.min(19, i + 1)];
  const d1 = Math.hypot(c[0] - a[0], c[1] - a[1]), d2 = Math.hypot(b[0] - c[0], b[1] - c[1]);
  const f = 0.4 * d1 / (d1 + d2), g = 0.4 * d2 / (d1 + d2);
  return [c[0] - f * (b[0] - a[0]), c[1] - f * (b[1] - a[1]), c[0] + g * (b[0] - a[0]), c[1] + g * (b[1] - a[1])];
});
let d = `M${pts[0]}`;
for (let i = 1; i < 20; i++) d += `C${ctrl[i - 1][2]} ${ctrl[i - 1][3]} ${ctrl[i][0]} ${ctrl[i][1]} ${pts[i]}`;
document.getElementById("cases").innerHTML = frame(L, R, 19, 30000000, 0)
  + `<path class="area" d="${d}V${base}H${L}z"/><path class="curve" d="${d}"/>`
  + pts.map(p => `<circle class="pt" cx="${p[0]}" cy="${p[1]}" r="3"/>`).join("")
  + `<rect x="833.5" y="894.500" width="40" height="12.500" fill="#ff54c4" stroke="#3c6589" stroke-width="2"/><text x="879.500" y="904">Covid19 Incidences</text>`;

const tops = [998.7,1461.3,1334,1546.7,1502.7,1547.3,1571.3,1533.5,1619.5,1566.5,1581.3,1590.5,1422.7,1599.7,1580.7,1593,1622.5,1609.7,1597,1628.7];
const rgb = ["255,99,132","54,162,235","255,206,86","75,192,192","153,102,255","255,159,64"];
const BL = 1897.5, BR = 3642, bw = (BR - BL) / 20;
document.getElementById("deaths").innerHTML = frame(BL, BR, 20, 600000, bw / 2)
  + tops.map((t, i) => {
    const x = BL + (i + 0.5) * bw - 31.8, c = rgb[i];
    return `<rect x="${x}" y="${t}" width="62.8" height="${base - t}" fill="${c ? `rgba(${c},.2)` : "rgba(20,28,0,.11)"}"/><path fill="none" stroke="${c ? `rgba(${c},.9)` : "rgba(0,0,0,.1)"}" d="M${x + .5} ${base}V${t + .5}h61.800V${base}"/>`;
  }).join("")
  + `<rect x="2677" y="894.700" width="40.500" height="12.500" fill="rgba(255,99,132,.2)" stroke="rgba(255,99,132,.8)"/><text x="2723" y="904">Covid19 Deaths</text>`;
```
